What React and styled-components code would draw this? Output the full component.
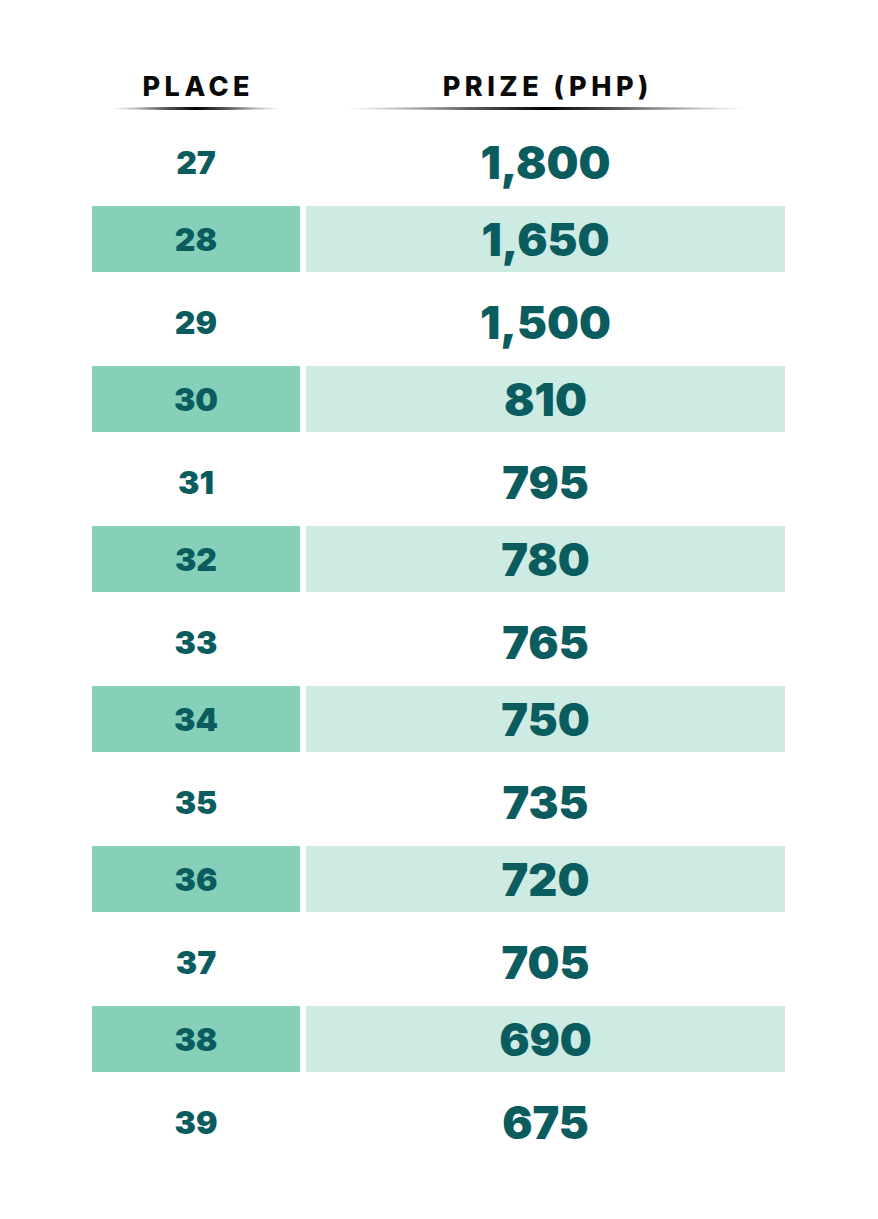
import React from 'react'
import styled, { createGlobalStyle } from 'styled-components'

const GlobalStyle = createGlobalStyle`
    body {
        margin: 0;
        background: #ffffff;
        font-family: Inter, "Liberation Sans", sans-serif;
    }
`

const Page = styled.div`
    width: 878px;
    height: 1219px;
    padding: 0 93px 0 92px;
    box-sizing: border-box;
    background: #ffffff;
`

const HeaderRow = styled.div`
    display: grid;
    grid-template-columns: 208px 479px;
    column-gap: 6px;
    height: 112px;
`

const HeaderCell = styled.div`
    display: flex;
    flex-direction: column;
    align-items: center;
    padding-top: 73px;
`

const HeaderText = styled.div`
    font-family: Inter, "Liberation Sans", sans-serif;
    font-weight: 800;
    font-size: 27px;
    line-height: 28px;
    letter-spacing: 4.5px;
    padding-left: 4.5px;
    color: #0a0a0a;
`

const Underline = styled.div`
    margin-top: 6px;
    width: ${props => props.width}px;
    height: 3px;
    border-radius: 50%;
    background: linear-gradient(to right, rgba(0,0,0,0) 0%, rgba(0,0,0,0.5) 25%, #000 50%, rgba(0,0,0,0.5) 75%, rgba(0,0,0,0) 100%);
`

const Row = styled.div`
    display: grid;
    grid-template-columns: 208px 479px;
    column-gap: 6px;
    height: ${props => props.striped ? 66 : 94}px;
`

const PlaceCell = styled.div`
    display: flex;
    align-items: center;
    justify-content: center;
    background: ${props => props.striped ? '#86cfb9' : 'transparent'};
    font-weight: 900;
    font-size: 32px;
    color: #0a5c5e;
    padding-top: ${props => props.striped ? 0 : 6}px;
`

const PrizeCell = styled.div`
    display: flex;
    align-items: center;
    justify-content: center;
    background: ${props => props.striped ? '#cdebe2' : 'transparent'};
    font-weight: 900;
    font-size: 45px;
    color: #0a5c5e;
    padding-top: ${props => props.striped ? 0 : 6}px;
`

const rows = [
    [27, '1,800'], [28, '1,650'], [29, '1,500'], [30, '810'],
    [31, '795'], [32, '780'], [33, '765'], [34, '750'],
    [35, '735'], [36, '720'], [37, '705'], [38, '690'], [39, '675'],
]

export default function App() {
    return (
        <>
            <GlobalStyle />
            <Page>
                <HeaderRow>
                    <HeaderCell>
                        <HeaderText>PLACE</HeaderText>
                        <Underline width={170} />
                    </HeaderCell>
                    <HeaderCell>
                        <HeaderText>PRIZE (PHP)</HeaderText>
                        <Underline width={405} />
                    </HeaderCell>
                </HeaderRow>
                {rows.map(([place, prize], i) => {
                    const striped = i % 2 === 1
                    return (
                        <Row key={place} striped={striped}>
                            <PlaceCell striped={striped}>{place}</PlaceCell>
                            <PrizeCell striped={striped}>{prize}</PrizeCell>
                        </Row>
                    )
                })}
            </Page>
        </>
    )
}
